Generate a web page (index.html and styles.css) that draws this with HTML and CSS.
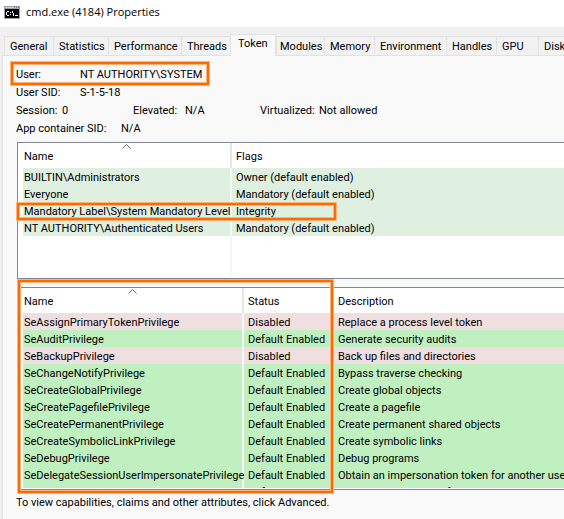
FILE: index.html
```html
<!DOCTYPE html>
<html lang="en">
<head>
<meta charset="utf-8">
<title>cmd.exe (4184) Properties</title>
<link rel="stylesheet" href="styles.css">
</head>
<body>
<header class="titlebar">
  <svg class="app-icon" width="16" height="13" viewBox="0 0 16 13" shape-rendering="crispEdges" aria-hidden="true">
    <path fill="#9aa0a8" d="M0 0h16v13H0z"/>
    <path fill="#c9d3df" d="M1 1h14v1H1z"/>
    <path fill="#4a6fa5" d="M10 1h1v1h-1zM12 1h1v1h-1zM14 1h1v1h-1z"/>
    <path fill="#000" d="M1 3h14v9H1z"/>
    <path fill="#fff" d="M3 5h2v1H3zM2 6h1v3H2zM3 9h2v1H3zM6 6h1v1H6zM6 8h1v1H6zM8 5h1v2H8zM9 7h1v3H9zM11 9h3v1h-3z"/>
  </svg>
  <h1 class="title">cmd.exe (4184) Properties</h1>
</header>
<main class="dialog">
  <nav class="tabs" role="tablist">
    <button class="tab" role="tab">General</button>
    <button class="tab" role="tab">Statistics</button>
    <button class="tab" role="tab">Performance</button>
    <button class="tab" role="tab">Threads</button>
    <button class="tab tab-active" role="tab" aria-selected="true">Token</button>
    <button class="tab" role="tab">Modules</button>
    <button class="tab" role="tab">Memory</button>
    <button class="tab" role="tab">Environment</button>
    <button class="tab" role="tab">Handles</button>
    <button class="tab" role="tab">GPU</button>
    <button class="tab" role="tab">Disk</button>
  </nav>
  <section class="pane">
    <div class="info">
      <div class="info-row marked"><span class="label-wide">User:</span><span>NT AUTHORITY\SYSTEM</span><i class="mark mark-user"></i></div>
      <div class="info-row"><span class="label-wide">User SID:</span><span>S-1-5-18</span></div>
      <div class="info-row session">
        <span>Session:</span><span>0</span><span>Elevated:</span><span>N/A</span><span>Virtualized:</span><span>Not allowed</span>
      </div>
      <div class="info-row container"><span>App container SID:</span><span>N/A</span></div>
    </div>
    <div class="list-wrap marked">
      <div class="list groups">
        <div class="viewport">
        <table>
          <colgroup><col class="group-name"><col></colgroup>
          <thead><tr><th class="sorted">Name<svg class="caret" width="9" height="5" viewBox="0 0 9 5" aria-hidden="true"><path d="M.5 4.5l4-4 4 4" fill="none" stroke="#666"/></svg></th><th>Flags</th></tr></thead>
          <tbody class="group">
            <tr><td>BUILTIN\Administrators</td><td>Owner (default enabled)</td></tr>
            <tr><td>Everyone</td><td>Mandatory (default enabled)</td></tr>
            <tr><td>Mandatory Label\System Mandatory Level</td><td>Integrity</td></tr>
            <tr><td>NT AUTHORITY\Authenticated Users</td><td>Mandatory (default enabled)</td></tr>
            <tr class="filler"><td></td><td></td></tr>
          </tbody>
        </table>
        </div>
      </div>
      <i class="mark mark-label"></i>
    </div>
    <div class="list-wrap marked">
      <div class="list privileges">
        <div class="viewport">
        <table>
          <colgroup><col class="priv-name"><col class="priv-status"><col></colgroup>
          <thead><tr><th class="sorted">Name<svg class="caret" width="9" height="5" viewBox="0 0 9 5" aria-hidden="true"><path d="M.5 4.5l4-4 4 4" fill="none" stroke="#666"/></svg></th><th>Status</th><th>Description</th></tr></thead>
          <tbody>
            <tr class="off"><td>SeAssignPrimaryTokenPrivilege</td><td>Disabled</td><td>Replace a process level token</td></tr>
            <tr class="on"><td>SeAuditPrivilege</td><td>Default Enabled</td><td>Generate security audits</td></tr>
            <tr class="off"><td>SeBackupPrivilege</td><td>Disabled</td><td>Back up files and directories</td></tr>
            <tr class="on"><td>SeChangeNotifyPrivilege</td><td>Default Enabled</td><td>Bypass traverse checking</td></tr>
            <tr class="on"><td>SeCreateGlobalPrivilege</td><td>Default Enabled</td><td>Create global objects</td></tr>
            <tr class="on"><td>SeCreatePagefilePrivilege</td><td>Default Enabled</td><td>Create a pagefile</td></tr>
            <tr class="on"><td>SeCreatePermanentPrivilege</td><td>Default Enabled</td><td>Create permanent shared objects</td></tr>
            <tr class="on"><td>SeCreateSymbolicLinkPrivilege</td><td>Default Enabled</td><td>Create symbolic links</td></tr>
            <tr class="on"><td>SeDebugPrivilege</td><td>Default Enabled</td><td>Debug programs</td></tr>
            <tr class="on"><td>SeDelegateSessionUserImpersonatePrivilege</td><td>Default Enabled</td><td>Obtain an impersonation token for another user</td></tr>
            <tr class="on"><td>SeImpersonatePrivilege</td><td>Default Enabled</td><td>Impersonate a client after authentication</td></tr>
          </tbody>
        </table>
        </div>
      </div>
      <i class="mark mark-privileges"></i>
    </div>
    <p class="hint">To view capabilities, claims and other attributes, click Advanced.</p>
  </section>
</main>
</body>
</html>
```
FILE: styles.css
```css
* { box-sizing: border-box; }

body {
  margin: 0;
  min-height: 100vh;
  display: flex;
  flex-direction: column;
  overflow: hidden;
  background: #f0f0f0;
  color: #000;
  font: 11px/18px Roboto, "Noto Sans", sans-serif;
  white-space: nowrap;
}

.titlebar {
  display: flex;
  align-items: center;
  gap: 6px;
  height: 27px;
  padding: 0 4px 3px;
  background: #fff;
}

.title {
  margin: 0;
  font: 11px/20px "Open Sans", sans-serif;
}

.dialog {
  flex: 1;
  display: flex;
  flex-direction: column;
  padding: 7px 0 0 2px;
}

.tabs {
  display: grid;
  grid-template-columns: 49px 55px 73px 49px 46px 48px 50px 72px 50px 42px 1fr;
  align-items: end;
  padding-left: 2px;
}

.tab {
  height: 19px;
  margin: 0;
  padding: 1px 0 0 5px;
  border: 1px solid #e2e2e2;
  border-width: 1px 0 0 1px;
  background: #f2f2f2;
  color: inherit;
  font: inherit;
  text-align: left;
}

.tab:last-child { overflow: hidden; }

.tab-active {
  position: relative;
  height: 22px;
  margin-bottom: -1px;
  padding: 0 0 3px 7px;
  border-right-width: 1px;
  background: #f9f9f9;
}

.tab-active + .tab { padding-left: 3px; }

.pane {
  flex: 1;
  padding: 10px 0 0 13px;
  border: 1px solid #e2e2e2;
  border-width: 1px 0 0 1px;
  background: #f9f9f9;
}

.info { padding-bottom: 4px; }

.info-row { display: flex; }

.label-wide { width: 64px; }

.session {
  display: grid;
  grid-template-columns: 46px 71px 52px 75px 59px auto;
}

.container {
  display: grid;
  grid-template-columns: 105px auto;
}

.marked { position: relative; }

.list-wrap { margin-left: 1px; }

.list-wrap + .list-wrap { margin-top: 8px; }

.list {
  padding-bottom: 1px;
  border: 1px solid #828790;
  border-right: 0;
  background: #fff;
}

.groups { height: 137px; }

.privileges { height: 203px; }

.viewport {
  height: 100%;
  overflow: hidden;
}

table {
  width: 100%;
  table-layout: fixed;
  border-spacing: 0;
  padding-left: 5px;
  line-height: 15px;
}

.group-name { width: 207px; }
.priv-name { width: 219px; }
.priv-status { width: 90px; }

th, td {
  height: 17px;
  padding: 2px 0 0 1px;
  font-weight: normal;
  text-align: left;
}

th { height: 25px; }

td:last-child { overflow: hidden; }

th + th, td + td {
  padding-left: 4px;
  border-left: 2px solid #f4f8fc;
}

th + th { border-color: #e5e5e5; }

.group td { background: #dfefe0; }
.off td { background: #f0dfe0; }
.on td { background: #c0f0c0; }

.group .filler td {
  height: 43px;
  background: #fff;
}

.sorted { position: relative; }

.caret {
  position: absolute;
  top: 1px;
  left: 50%;
  margin-left: -5px;
}

.mark {
  position: absolute;
  border: 2px solid #ff6a00;
  box-shadow: 0 0 0 1px #ffb27a, inset 0 0 0 1px #ffb27a;
  pointer-events: none;
}

.mark-user { top: -4px; left: -5px; width: 198px; height: 23px; }
.mark-label { top: 61px; left: 0; width: 319px; height: 17px; }
.mark-privileges { top: -7px; bottom: -3px; left: 1px; width: 315px; }

.hint { margin: 4px 0 0; }
```
